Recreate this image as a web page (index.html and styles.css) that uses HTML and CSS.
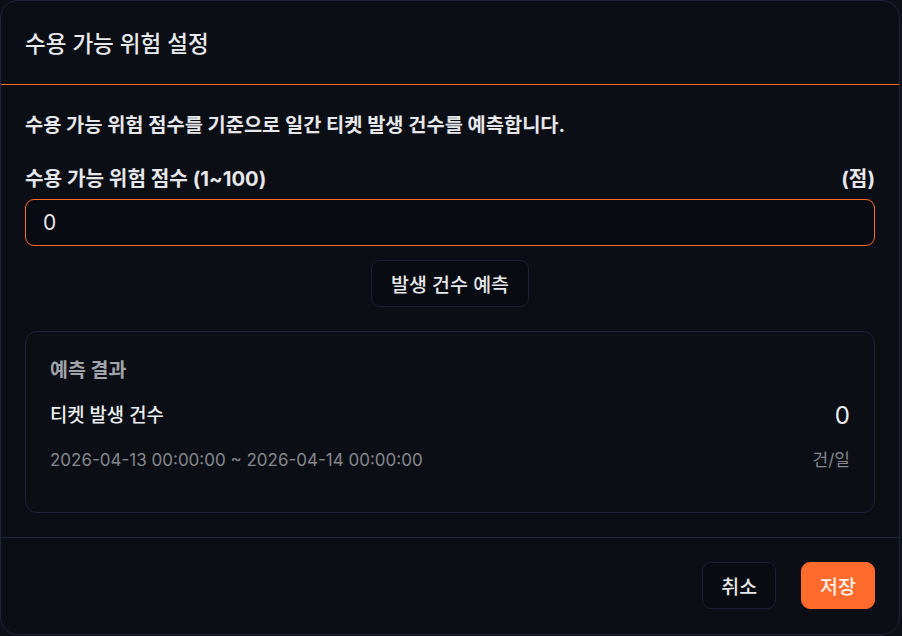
FILE: index.html
```html
<!DOCTYPE html>
<html lang="ko">
<head>
<meta charset="utf-8">
<link rel="stylesheet" href="styles.css">
</head>
<body>
<div class="dialog">
  <div class="header">
    <h1 class="title">수용 가능 위험 설정</h1>
  </div>
  <div class="body">
    <p class="desc">수용 가능 위험 점수를 기준으로 일간 티켓 발생 건수를 예측합니다.</p>
    <div class="label-row">
      <span>수용 가능 위험 점수 (1~100)</span>
      <span>(점)</span>
    </div>
    <div class="input">0</div>
    <div class="predict-wrap">
      <button class="btn">발생 건수 예측</button>
    </div>
    <div class="card">
      <div class="card-title">예측 결과</div>
      <div class="row main-row">
        <span>티켓 발생 건수</span>
        <span class="value">0</span>
      </div>
      <div class="row sub-row">
        <span>2026-04-13 00:00:00 ~ 2026-04-14 00:00:00</span>
        <span>건/일</span>
      </div>
    </div>
  </div>
  <div class="footer">
    <button class="btn">취소</button>
    <button class="btn primary">저장</button>
  </div>
</div>
</body>
</html>
```
FILE: styles.css
```css
* { box-sizing: border-box; }
html, body {
  margin: 0;
  padding: 0;
  background: #0d1017;
  width: 902px;
  height: 636px;
  overflow: hidden;
}
body {
  font-family: Inter, "Noto Sans CJK KR", sans-serif;
  color: #e6e7ea;
}
.dialog {
  width: 900px;
  height: 635px;
  background: #0b0e15;
  border: 1px solid #1f2637;
  border-radius: 18px;
  display: flex;
  flex-direction: column;
  overflow: hidden;
}
.header {
  height: 84px;
  border-bottom: 1px solid #ff6a2a;
  padding: 0 24px;
  display: flex;
  align-items: center;
}
.title {
  margin: 0;
  font-size: 22.5px;
  font-weight: 500;
  color: #e9eaed;
  position: relative;
  top: -1px;
}
.body {
  padding: 27px 24px 24px;
  flex: 1;
  display: flex;
  flex-direction: column;
}
.desc {
  margin: 0;
  font-size: 19.8px;
  font-weight: 700;
  line-height: 26px;
  color: #e6e7ea;
}
.label-row {
  margin-top: 29px;
  display: flex;
  justify-content: space-between;
  font-size: 20.2px;
  font-weight: 700;
  line-height: 24px;
  color: #e6e7ea;
}
.input {
  margin-top: 8px;
  height: 47px;
  border: 1px solid #ff6a2a;
  border-radius: 9px;
  background: #080b11;
  padding: 0 17px;
  display: flex;
  align-items: center;
  font-size: 21px;
  color: #e6e7ea;
}
.predict-wrap {
  display: flex;
  justify-content: center;
  margin-top: 14px;
}
.btn {
  font-family: Inter, "Noto Sans CJK KR", sans-serif;
  height: 47px;
  padding: 0 19px;
  border: 1px solid #1c2233;
  border-radius: 9px;
  background: #080b11;
  color: #e6e7ea;
  font-size: 19.5px;
  font-weight: 500;
  cursor: pointer;
}
.card {
  margin-top: 24px;
  height: 182px;
  border: 1px solid #1f2637;
  border-radius: 12px;
  padding: 26px 24px 0;
  display: flex;
  flex-direction: column;
}
.card-title {
  font-size: 19.5px;
  font-weight: 700;
  color: #a2a4aa;
  line-height: 24px;
}
.row {
  display: flex;
  justify-content: space-between;
  align-items: center;
}
.main-row {
  margin-top: 21px;
  font-size: 18.8px;
  font-weight: 500;
  color: #eceef0;
  line-height: 26px;
}
.main-row .value {
  font-size: 24px;
  font-weight: 400;
}
.sub-row {
  margin-top: 20px;
  font-size: 17px;
  color: #85878d;
  line-height: 22px;
}
.footer {
  border-top: 1px solid #1f2637;
  height: 97px;
  padding: 24px 24px 0;
  display: flex;
  justify-content: flex-end;
  align-items: flex-start;
  gap: 25px;
}
.footer .btn {
  padding: 0 18px;
}
.btn.primary {
  background: #ff6b2c;
  border-color: #ff6b2c;
  color: #fff3ec;
}
```
